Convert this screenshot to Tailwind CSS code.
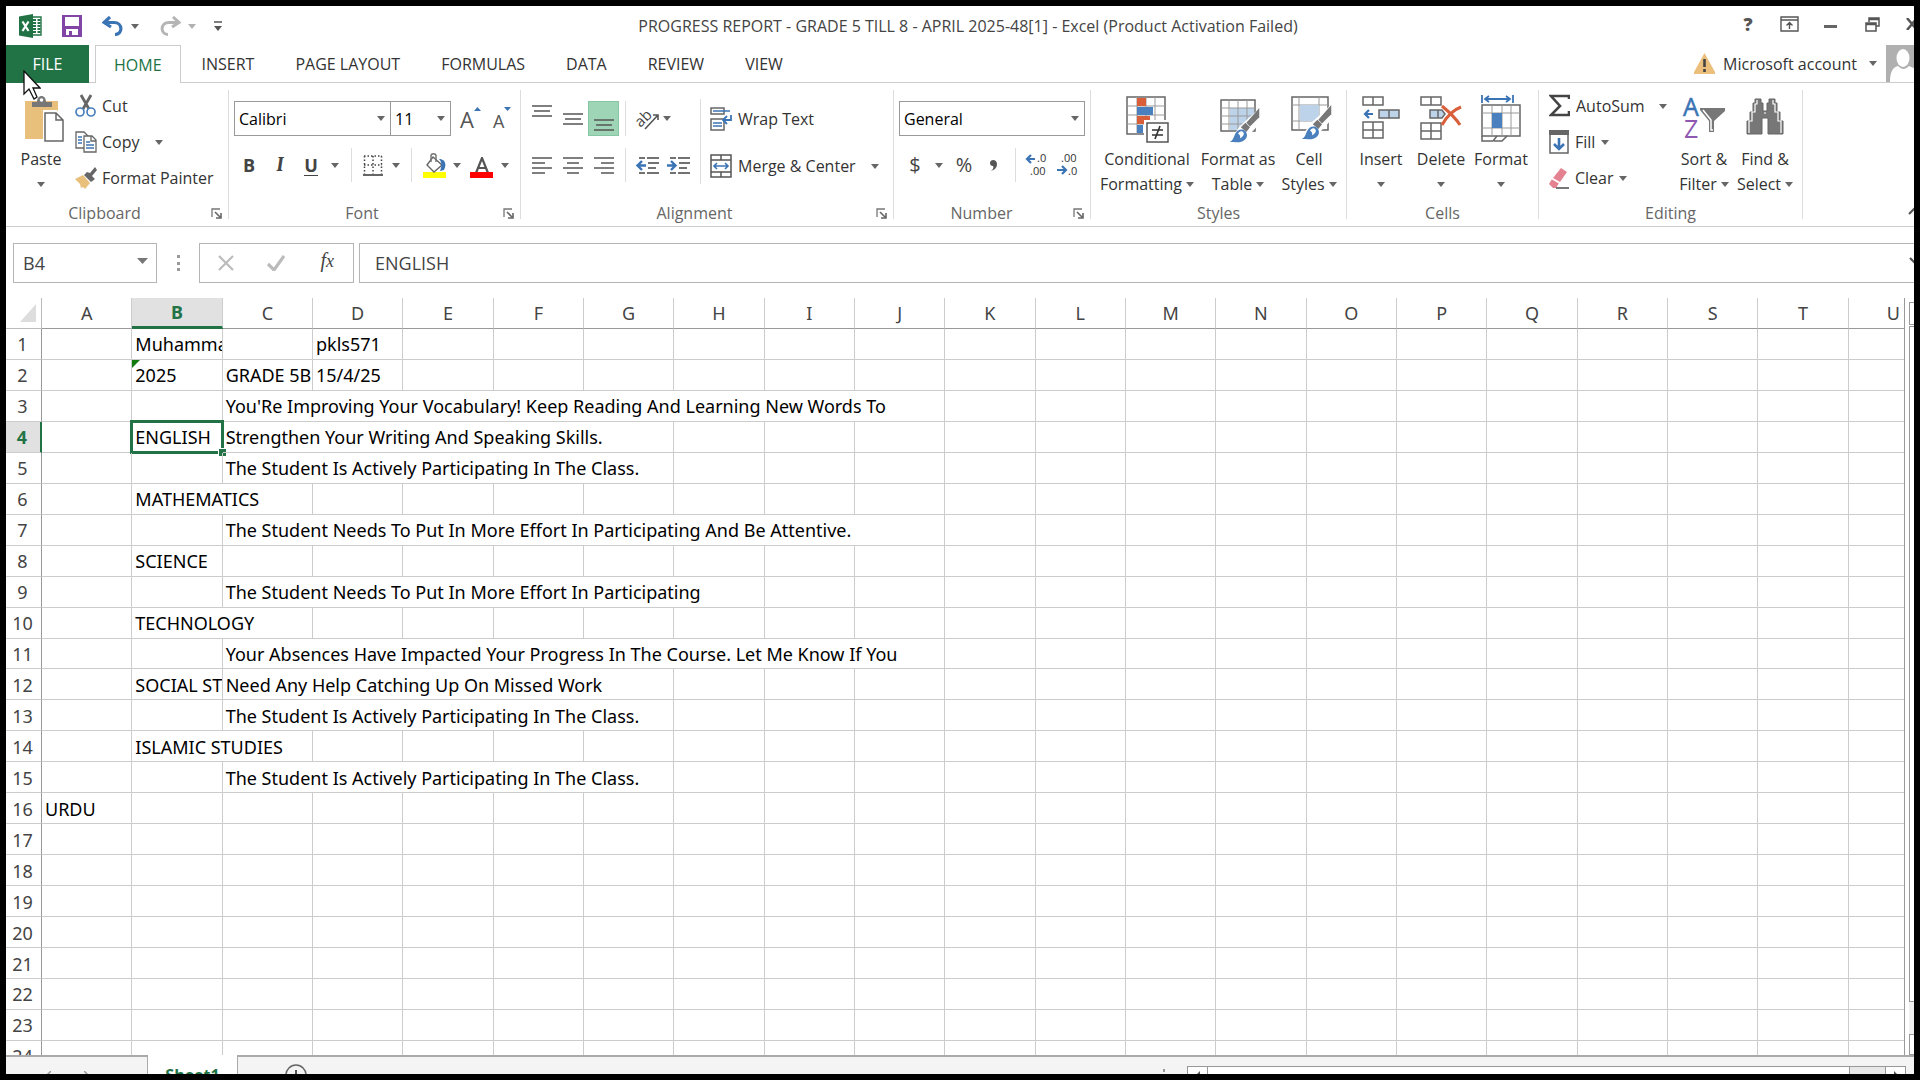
<!DOCTYPE html>
<html lang="en">
<head>
    <meta charset="UTF-8">
    <meta name="viewport" content="width=device-width, initial-scale=1.0">
    <title>PROGRESS REPORT - GRADE 5 TILL 8 - APRIL 2025-48[1] - Excel</title>
    <script src="https://cdn.jsdelivr.net/npm/@tailwindcss/browser@4"></script>
    <style>
        body { font-family: 'Open Sans', 'Noto Sans', sans-serif; }
    </style>
</head>
<body class="h-screen overflow-hidden bg-black p-[6px] text-base text-[#333]">
    <!-- Shared symbols -->
    <svg class="hidden">
        <symbol id="caret" viewBox="0 0 8 5"><path d="M0 0h8L4 5z" fill="#666"/></symbol>
        <symbol id="launcher" viewBox="0 0 11 11"><path d="M1 9V1h8" fill="none" stroke="#777" stroke-width="1.3"/><path d="M4 4l5 5M10 5v5H5" fill="none" stroke="#666" stroke-width="1.6"/></symbol>
        <symbol id="brush" viewBox="0 0 34 38"><path d="M33 0v10L23 20l-4-4z" fill="#777"/><path d="M18 16l5 5-4 5-6-5z" fill="#777"/><path d="M1 37c4-2 4-5 6-9 2-5 8-6 11-3 3 4 2 9-3 11-4 2-10 1-14 1z" fill="#4a80bd"/><path d="M10 28c1-3 5-4 6-1 1 2-1 5-4 6 1-2 0-4-2-5z" fill="#fff"/></symbol>
    </svg>

    <div class="relative flex h-full flex-col overflow-hidden bg-white">
        <!-- Title bar -->
        <header class="grid h-[39px] shrink-0 grid-cols-[1fr_auto_1fr] items-center">
            <div class="flex items-center pl-[13px] pt-px">
                <svg class="h-6 w-6" viewBox="0 0 24 24"><path d="M10 3h12v18H10z" fill="#fff" stroke="#217346" stroke-width="1.4"/><path d="M14 6h3M18.500 6h3M14 9h3M18.500 9h3M14 12h3M18.500 12h3M14 15h3M18.500 15h3M14 18h3M18.500 18h3" stroke="#217346" stroke-width="1.800"/><path d="M0 2.500L14 0v24L0 21.500z" fill="#217346"/><path d="M3.500 7.500l6 9.500M9.500 7.500l-6 9.500" stroke="#fff" stroke-width="2.200"/></svg>
                <button aria-label="Save" class="ml-[19px]"><svg class="h-[22px] w-5" viewBox="0 0 20 22"><path d="M0 0h20v22H0z" fill="#8146a5"/><path d="M3 2h14v9H3zM4 14h12v6H4z" fill="#fff"/><path d="M7 16h3v4H7z" fill="#8146a5"/></svg></button>
                <button aria-label="Undo" class="ml-5"><svg class="h-5 w-[22px]" viewBox="0 0 22 20"><path d="M8 1L2 6.500 9 11M3 6.500h9c9 0 9 12 1 12" fill="none" stroke="#3b74b5" stroke-width="3.200"/></svg></button>
                <button aria-label="Undo list" class="ml-[7px]"><svg class="h-[5px] w-2"><use href="#caret"/></svg></button>
                <button aria-label="Redo" class="ml-5"><svg class="h-5 w-[22px]" viewBox="0 0 22 20"><path d="M14 1l6 5.500L13 11M19 6.500h-9c-9 0-9 12-1 12" fill="none" stroke="#b5b5b5" stroke-width="3"/></svg></button>
                <button aria-label="Redo list" class="ml-[7px] opacity-50"><svg class="h-[5px] w-2"><use href="#caret"/></svg></button>
                <button aria-label="Customize Quick Access Toolbar" class="ml-[18px]"><svg class="h-[10px] w-2" viewBox="0 0 8 10"><path d="M0 1h8" stroke="#555" stroke-width="1.500"/><path d="M0 5h8l-4 5z" fill="#555"/></svg></button>
            </div>
            <h1 class="pl-4 text-[#444]">PROGRESS REPORT - GRADE 5 TILL 8 - APRIL 2025-48[1] - Excel (Product Activation Failed)</h1>
            <div class="-mr-1 flex items-center justify-end pb-[3px] text-[#555]">
                <button aria-label="Help" class="w-9 text-lg leading-none font-extrabold">?</button>
                <button aria-label="Ribbon display options" class="ml-[14px]"><svg class="h-4 w-[19px]" viewBox="0 0 19 16" fill="none" stroke="#555" stroke-width="1.400"><path d="M1 1h17v14H1zM1 4h17M9.500 13V7M6.500 9.500l3-3 3 3"/></svg></button>
                <button aria-label="Minimize" class="ml-[25px] pt-[5px]"><svg class="h-[3px] w-[13px]"><path d="M0 0h13v3H0z" fill="#666"/></svg></button>
                <button aria-label="Restore" class="ml-[28px]"><svg class="h-[15px] w-[15px]" viewBox="0 0 15 15" fill="none" stroke="#555" stroke-width="1.500"><path d="M4 5V1h10v8h-3M1 6h10v8H1zM1 7.500h10M4 2.500h10"/></svg></button>
                <button aria-label="Close" class="ml-[26px]"><svg class="h-3 w-3" viewBox="0 0 12 12"><path d="M1 0l10 12M11 0L1 12" stroke="#555" stroke-width="2.500"/></svg></button>
            </div>
        </header>

        <!-- Ribbon tabs -->
        <nav class="flex h-[38px] shrink-0 items-stretch">
            <button class="w-[83px] bg-[#217346] text-white">FILE</button>
            <span class="w-[6px] border-b border-[#ccc]"></span>
            <button class="border border-b-0 border-[#ccc] px-[18px] text-[#217346]">HOME</button>
            <div class="flex grow gap-px border-b border-[#ccc] pl-px">
                <button class="px-5">INSERT</button>
                <button class="px-5">PAGE LAYOUT</button>
                <button class="px-5">FORMULAS</button>
                <button class="px-5">DATA</button>
                <button class="px-5">REVIEW</button>
                <button class="px-5">VIEW</button>
                <button class="ml-auto flex items-center gap-2 pr-2">
                    <svg class="h-[21px] w-[21px]" viewBox="0 0 21 21"><path d="M10.500 0L21 19v2H0v-2z" fill="#ecc07c"/><path d="M10.500 6v8M10.500 16v3" stroke="#444" stroke-width="2.600"/></svg>
                    Microsoft account
                    <svg class="ml-1 h-[5px] w-2"><use href="#caret"/></svg>
                </button>
                <svg class="h-[37px] w-7 bg-[#b0b0b0]" viewBox="0 0 28 37"><ellipse cx="17" cy="13" rx="6.500" ry="9" fill="#fff"/><path d="M4 37c0-12 4-15 8-16 4 4 7 4 11 0l7 3v13z" fill="#fff"/></svg>
            </div>
        </nav>

        <!-- Ribbon -->
        <section class="flex h-36 shrink-0 border-b border-[#ccc] pt-[7px] pb-[7px]">
            <!-- Clipboard -->
            <div class="flex w-[223px] flex-col border-r border-[#ddd]">
                <div class="flex grow">
                    <button class="ml-3 flex w-[46px] flex-col items-center justify-start pt-[6px] leading-[25px]">
                        <svg class="mb-1 ml-[6px] h-[46px] w-10" viewBox="0 0 40 46"><path d="M1 5h33v38H1z" fill="#e8c07c"/><path d="M8 11V6h5c0-8 9-8 9 0h6v5z" fill="#777"/><circle cx="17.500" cy="4" r="1.800" fill="#fff"/><path d="M19 14h14l8 8v24H19z" fill="#fff"/><path d="M21 17h11l7 7v21H21zM32 17v7h7" fill="#fff" stroke="#666" stroke-width="1.500"/></svg>
                        <span class="pt-px">Paste</span>
                        <svg class="mt-[10px] h-[5px] w-2"><use href="#caret"/></svg>
                    </button>
                    <div class="-mt-[2px] ml-[11px] flex flex-col">
                        <button class="flex h-9 items-center gap-[5px]"><svg class="h-6 w-[22px]" viewBox="0 0 22 24"><path d="M6 1l8 14M16 1L8 15" stroke="#666" stroke-width="2.800"/><circle cx="5" cy="18" r="4" fill="none" stroke="#4a80bd" stroke-width="1.700"/><circle cx="16" cy="18" r="4" fill="none" stroke="#4a80bd" stroke-width="1.700"/></svg>Cut</button>
                        <button class="flex h-9 items-center gap-[5px]"><svg class="h-[22px] w-[22px]" viewBox="0 0 22 22" stroke="#666" stroke-width="1.300"><path d="M1 1h8l4 4v12H1z" fill="#fff"/><path d="M3 6h4M3 9h4M3 12h4" stroke="#3b74b5"/><path d="M9 5h8l4 4v12H9zM16 5v5h5" fill="#fff"/><path d="M11 11h4M11 14h8M11 17h8" stroke="#3b74b5" stroke-width="1.600"/></svg>Copy <svg class="ml-[10px] h-[5px] w-2"><use href="#caret"/></svg></button>
                        <button class="flex h-9 items-center gap-[5px]"><svg class="h-[22px] w-[22px]" viewBox="0 0 22 22"><path d="M20 0l2 3-5 6 3 3-4 3-7-7 3-3 3 1z" fill="#666"/><path d="M8 8l7 8-5 6-2-2-2 1-1-4-5-5z" fill="#e8c07c"/></svg>Format Painter</button>
                    </div>
                </div>
                <div class="flex h-3 items-center pr-[6px] text-[#666]"><span class="grow pl-1 text-center -indent-3">Clipboard</span><button aria-label="Clipboard options"><svg class="h-[11px] w-[11px]"><use href="#launcher"/></svg></button></div>
            </div>

            <!-- Font -->
            <div class="flex w-[292px] flex-col border-r border-[#ddd]">
                <div class="grow pt-[11px] pl-[5px]">
                    <div class="flex h-[35px]">
                        <div class="relative h-[35px] w-[157px]">
                            <select aria-label="Font" class="h-full w-full appearance-none border border-[#999] px-1 text-black"><option>Calibri</option></select>
                            <svg class="pointer-events-none absolute top-[15px] right-[6px] h-[5px] w-2"><use href="#caret"/></svg>
                        </div>
                        <div class="relative -ml-px h-[35px] w-[61px]">
                            <select aria-label="Font size" class="h-full w-full appearance-none border border-[#999] px-1 text-black"><option>11</option></select>
                            <svg class="pointer-events-none absolute top-[15px] right-[6px] h-[5px] w-2"><use href="#caret"/></svg>
                        </div>
                        <button aria-label="Increase font size" class="ml-[9px] flex items-start pt-1 text-[22px] leading-7 text-[#555]">A<svg class="mt-[2px] h-1 w-[7px]"><path d="M0 4h7L3.500 0z" fill="#3b74b5"/></svg></button>
                        <button aria-label="Decrease font size" class="ml-3 flex items-start pt-1 text-lg leading-8 text-[#555]">A<svg class="mt-[2px] h-1 w-[7px]"><path d="M0 0h7L3.500 4z" fill="#3b74b5"/></svg></button>
                    </div>
                    <div class="mt-3 flex h-[34px] items-center text-[#444]">
                        <button class="w-[30px] text-lg font-bold">B</button>
                        <button class="w-8 font-serif text-xl font-bold italic">I</button>
                        <button class="flex h-[22px] w-[30px] items-center justify-center"><span class="border-b border-[#444] text-lg leading-5 font-bold">U</span></button>
                        <button aria-label="Underline list" class="flex w-[18px] justify-center"><svg class="h-[5px] w-2"><use href="#caret"/></svg></button>
                        <span class="mx-[7px] h-full w-px bg-[#ddd]"></span>
                        <button aria-label="Borders" class="flex w-[27px] justify-center"><svg class="h-[21px] w-5" viewBox="0 0 20 21" fill="none"><path d="M1 1h18M1 10h18M1.500 1v18M10 1v18M18.500 1v18" stroke="#444" stroke-width="1.500" stroke-dasharray="1.500 2"/><path d="M0 20h20" stroke="#555" stroke-width="1.800"/></svg></button>
                        <button aria-label="Borders list" class="flex w-5 justify-center"><svg class="h-[5px] w-2"><use href="#caret"/></svg></button>
                        <span class="mx-[5px] h-full w-px bg-[#ddd]"></span>
                        <button aria-label="Fill color" class="flex w-[34px] justify-center"><svg class="h-[25px] w-[23px]" viewBox="0 0 23 25"><path d="M0 19h23v6H0z" fill="#ff0"/><path d="M10 4l9 8-8 7-7-7z" fill="#fff" stroke="#666" stroke-width="1.400"/><path d="M8 9V3c0-3 5-3 5 0v6" fill="none" stroke="#777" stroke-width="1.500"/><path d="M16 6c6 0 8 5 5 11l-4 1c2-5 2-9-1-12z" fill="#3b74b5"/></svg></button>
                        <button aria-label="Fill color list" class="flex w-3 justify-center"><svg class="h-[5px] w-2"><use href="#caret"/></svg></button>
                        <button aria-label="Font color" class="flex w-9 justify-center pt-1"><svg class="h-[21px] w-[23px]" viewBox="0 0 23 21"><path d="M6 16L12 1l6 15M8 11h8" fill="none" stroke="#555" stroke-width="2.200"/><path d="M0 15h23v6H0z" fill="#f00"/></svg></button>
                        <button aria-label="Font color list" class="flex w-3 justify-center"><svg class="h-[5px] w-2"><use href="#caret"/></svg></button>
                    </div>
                </div>
                <div class="flex h-3 items-center pr-[6px] text-[#666]"><span class="grow text-center -indent-2">Font</span><button aria-label="Font options"><svg class="h-[11px] w-[11px]"><use href="#launcher"/></svg></button></div>
            </div>

            <!-- Alignment -->
            <div class="flex w-[373px] flex-col border-r border-[#ddd]">
                <div class="flex grow pl-[5px]">
                    <div class="pt-[11px]">
                        <div class="flex h-[35px] items-center">
                            <button aria-label="Top align" class="flex h-full w-[31px] justify-center pt-1"><svg class="h-3 w-5"><path d="M0 1h20M2 6h16M0 11h20" stroke="#555" stroke-width="1.500"/></svg></button>
                            <button aria-label="Middle align" class="flex h-full w-[31px] items-center justify-center"><svg class="h-3 w-5"><path d="M0 1h20M2 6h16M0 11h20" stroke="#555" stroke-width="1.500"/></svg></button>
                            <button aria-label="Bottom align" class="flex h-full w-[31px] items-end justify-center border border-[#86c7a3] bg-[#9fd5b7] pb-1"><svg class="h-3 w-5"><path d="M0 1h20M2 6h16M0 11h20" stroke="#555" stroke-width="1.500"/></svg></button>
                            <span class="mx-[6px] h-full w-px bg-[#ddd]"></span>
                            <button aria-label="Orientation" class="flex w-[31px] items-center justify-center"><svg class="h-6 w-6 overflow-visible" viewBox="0 0 24 24"><text x="0" y="18" transform="rotate(-45 6 14)" font-size="15" fill="#444">ab</text><path d="M9 22L22 8M17 8h5v5" fill="none" stroke="#555" stroke-width="1.600"/></svg></button>
                            <button aria-label="Orientation list"><svg class="h-[5px] w-2"><use href="#caret"/></svg></button>
                        </div>
                        <div class="mt-3 flex h-[34px] items-center">
                            <button aria-label="Align left" class="flex w-[31px] justify-center"><svg class="h-[17px] w-5"><path d="M0 1h20M0 6h13M0 11h20M0 16h13" stroke="#555" stroke-width="1.500"/></svg></button>
                            <button aria-label="Center" class="flex w-[31px] justify-center"><svg class="h-[17px] w-5"><path d="M0 1h20M4 6h12M0 11h20M4 16h12" stroke="#555" stroke-width="1.500"/></svg></button>
                            <button aria-label="Align right" class="flex w-[31px] justify-center"><svg class="h-[17px] w-5"><path d="M0 1h20M7 6h13M0 11h20M7 16h13" stroke="#555" stroke-width="1.500"/></svg></button>
                            <span class="mx-[6px] h-full w-px bg-[#ddd]"></span>
                            <button aria-label="Decrease indent" class="flex w-[31px] justify-center"><svg class="h-[17px] w-[23px]" viewBox="0 0 23 17" fill="none"><path d="M3 1h6M11 1h12M12 6h11M12 11h8M3 16h6M11 16h12" stroke="#444" stroke-width="1.600"/><path d="M10 8.500H2M6 4L1.500 8.500 6 13" stroke="#3b74b5" stroke-width="2.400"/></svg></button>
                            <button aria-label="Increase indent" class="flex w-[31px] justify-center"><svg class="h-[17px] w-[23px]" viewBox="0 0 23 17" fill="none"><path d="M3 1h6M11 1h12M12 6h11M12 11h8M3 16h6M11 16h12" stroke="#444" stroke-width="1.600"/><path d="M0 8.500h8M4 4l4.500 4.500L4 13" stroke="#3b74b5" stroke-width="2.400"/></svg></button>
                        </div>
                    </div>
                    <span class="mt-[9px] mr-[9px] ml-[6px] h-[85px] w-px bg-[#ddd]"></span>
                    <div class="pt-[11px]">
                        <button class="flex h-[35px] items-center gap-[6px]"><svg class="h-6 w-[22px]" viewBox="0 0 22 24" fill="none"><path d="M1 1h13v6H1zM1 12h13v11H1z" stroke="#666" stroke-width="1.500"/><path d="M3 4h17M3 16h9M3 19h9" stroke="#3b74b5" stroke-width="1.600"/><path d="M21 8v5h-7M17 9l-4 4 4 4" stroke="#3b74b5" stroke-width="1.800"/></svg>Wrap Text</button>
                        <button class="mt-[13px] flex h-[34px] items-center gap-[6px]"><svg class="h-6 w-[22px]" viewBox="0 0 22 24" fill="none"><path d="M1 1h20v22H1zM1 6h20M1 18h20M11 1v5M11 18v5" stroke="#555" stroke-width="1.500"/><path d="M4 12h14M7 9l-3 3 3 3M15 9l3 3-3 3" stroke="#3b74b5" stroke-width="1.600"/></svg>Merge &amp; Center <svg class="ml-[9px] h-[5px] w-2"><use href="#caret"/></svg></button>
                    </div>
                </div>
                <div class="flex h-3 items-center pr-[6px] text-[#666]"><span class="grow text-center -indent-2">Alignment</span><button aria-label="Alignment options"><svg class="h-[11px] w-[11px]"><use href="#launcher"/></svg></button></div>
            </div>

            <!-- Number -->
            <div class="flex w-[197px] flex-col border-r border-[#ddd]">
                <div class="grow px-[5px] pt-[11px]">
                    <div class="relative h-[35px]">
                        <select aria-label="Number format" class="h-full w-full appearance-none border border-[#999] px-1 text-black"><option>General</option></select>
                        <svg class="pointer-events-none absolute top-[15px] right-[6px] h-[5px] w-2"><use href="#caret"/></svg>
                    </div>
                    <div class="mt-3 flex h-[34px] items-center text-[#444]">
                        <button class="w-8 text-xl">$</button>
                        <button aria-label="Accounting format list" class="flex w-4 justify-center"><svg class="h-[5px] w-2"><use href="#caret"/></svg></button>
                        <button class="w-[34px] text-xl">%</button>
                        <button aria-label="Comma style" class="flex w-6 justify-center"><svg class="h-[11px] w-[7px]" viewBox="0 0 7 11"><path d="M0 3c0-4 7-4 7 1 0 4-3 6-6 7 2-2 3-3 2-5-2 0-3-1-3-3z" fill="#555"/></svg></button>
                        <span class="mr-[6px] ml-[10px] h-full w-px bg-[#ddd]"></span>
                        <button aria-label="Increase decimal" class="w-[31px]"><svg class="ml-[4px] h-[22px] w-[22px] overflow-visible" viewBox="0 0 22 22"><path d="M9 5H2M5 1L1 5l4 4" fill="none" stroke="#3b74b5" stroke-width="2.200"/><text x="11" y="8" font-size="11" fill="#333">.0</text><text x="4" y="21" font-size="11" fill="#333">.00</text></svg></button>
                        <button aria-label="Decrease decimal" class="w-[31px]"><svg class="ml-[4px] h-[22px] w-[22px] overflow-visible" viewBox="0 0 22 22"><path d="M0 16h8M5 12l4 4-4 4" fill="none" stroke="#3b74b5" stroke-width="2.200"/><text x="4" y="8" font-size="11" fill="#333">.00</text><text x="11" y="21" font-size="11" fill="#333">.0</text></svg></button>
                    </div>
                </div>
                <div class="flex h-3 items-center pr-[6px] text-[#666]"><span class="grow text-center -indent-1">Number</span><button aria-label="Number options"><svg class="h-[11px] w-[11px]"><use href="#launcher"/></svg></button></div>
            </div>

            <!-- Styles -->
            <div class="flex w-64 flex-col border-r border-[#ddd]">
                <div class="flex grow items-start pt-[6px] pl-1 leading-[25px]">
                    <button class="flex w-[104px] flex-col items-center whitespace-nowrap">
                        <svg class="mb-1 h-[47px] w-[43px] shrink-0" viewBox="0 0 43 47"><path d="M1 1h38v37H1z" fill="#fff" stroke="#666" stroke-width="1.500"/><path d="M1 10h38M1 19h38M1 28h38M11 1v37M20 1v37M29 1v37" stroke="#999"/><path d="M11 2h9v8h-9zM11 20h13v8H11z" fill="#d95f3b"/><path d="M11 11h16v8H11zM11 29h6v8h-6z" fill="#4a80bd"/><path d="M18 24h25v23H18z" fill="#fff"/><path d="M21 27h21v19H21z" fill="#fff" stroke="#555" stroke-width="1.500"/><path d="M26 34h11M26 39h11M34 30l-5 13" stroke="#333" stroke-width="1.600"/></svg>
                        <span>Conditional</span>
                        <span class="flex items-center gap-1">Formatting <svg class="h-[5px] w-2"><use href="#caret"/></svg></span>
                    </button>
                    <button class="flex w-[78px] flex-col items-center whitespace-nowrap">
                        <svg class="mb-1 ml-[6px] h-[47px] w-[42px] shrink-0" viewBox="0 0 42 47"><path d="M1 4h34v31H1z" fill="#fff" stroke="#666" stroke-width="1.500"/><path d="M10 12h24v22H10z" fill="#bcd3ea"/><path d="M1 12h34M1 20h34M1 28h34M9 4v31M18 4v31M27 4v31" stroke="#999"/><path d="M42 10v15L30 38l-9 9H8L20 30z" fill="#fff"/><use href="#brush" x="8" y="12" width="33" height="35"/></svg>
                        <span>Format as</span>
                        <span class="flex items-center gap-1">Table <svg class="h-[5px] w-2"><use href="#caret"/></svg></span>
                    </button>
                    <button class="flex w-16 flex-col items-center whitespace-nowrap">
                        <svg class="mb-1 ml-[6px] h-[47px] w-[42px] shrink-0" viewBox="0 0 42 47"><path d="M1 1h36v33H1z" fill="#fff" stroke="#666" stroke-width="1.500"/><path d="M1 9h36M1 25h36M8 1v33M28 1v33" stroke="#999"/><path d="M9 9h19v16H9z" fill="#bcd3ea"/><path d="M42 7v15L30 35l-9 9H8L20 27z" fill="#fff"/><use href="#brush" x="9" y="9" width="33" height="35"/></svg>
                        <span>Cell</span>
                        <span class="flex items-center gap-1">Styles <svg class="h-[5px] w-2"><use href="#caret"/></svg></span>
                    </button>
                </div>
                <div class="h-3 text-center leading-3 text-[#666]">Styles</div>
            </div>

            <!-- Cells -->
            <div class="flex w-48 flex-col border-r border-[#ddd]">
                <div class="flex grow items-start pt-[6px] pl-1 leading-[25px]">
                    <button class="flex w-[60px] flex-col items-center">
                        <svg class="mb-1 h-[47px] w-[38px] shrink-0" viewBox="0 0 38 47" fill="#fff" stroke="#666" stroke-width="1.500"><path d="M1 1h20v8H1zM11 1v8M1 26h20v16H1zM1 34h20M11 26v16"/><path d="M17 14h20v8H17zM27 14v8" fill="#bcd3ea"/><path d="M11 18H3M7 14l-4 4 4 4" fill="none" stroke="#3b74b5" stroke-width="2.200"/></svg>
                        <span>Insert</span>
                        <svg class="mt-[10px] h-[5px] w-2"><use href="#caret"/></svg>
                    </button>
                    <button class="flex w-[60px] flex-col items-center">
                        <svg class="mb-1 h-[47px] w-[42px] shrink-0" viewBox="0 0 42 47" fill="#fff" stroke="#666" stroke-width="1.500"><path d="M1 1h20v8H1zM11 1v8M1 27h20v16H1zM1 35h20M11 27v16"/><path d="M10 14h12l3 4-3 4H10zM18 14v8" fill="#bcd3ea"/><path d="M22 10c6 5 13 11 18 19M41 11C33 14 27 20 22 29" fill="none" stroke="#d95f3b" stroke-width="3"/></svg>
                        <span>Delete</span>
                        <svg class="mt-[10px] h-[5px] w-2"><use href="#caret"/></svg>
                    </button>
                    <button class="flex w-[60px] flex-col items-center">
                        <svg class="-mt-[2px] mb-1 h-[49px] w-10 shrink-0" viewBox="0 0 40 49" fill="none"><path d="M1 11h38v31H1z" fill="#fff" stroke="#666" stroke-width="1.500"/><path d="M1 19h38M1 34h38M11 11v31M21 11v31M30 11v31" stroke="#999"/><path d="M11 19h10v15H11z" fill="#4a80bd"/><path d="M1 42v5h11l4-5M13 47h8l5-5" stroke="#666" stroke-width="1.500"/><path d="M1 1v8M32 1v8M4 5h25M8 2L4 5l4 3M25 2l4 3-4 3" stroke="#3b74b5" stroke-width="1.800"/></svg>
                        <span>Format</span>
                        <svg class="mt-[10px] h-[5px] w-2"><use href="#caret"/></svg>
                    </button>
                </div>
                <div class="h-3 text-center leading-3 text-[#666]">Cells</div>
            </div>

            <!-- Editing -->
            <div class="flex w-[264px] flex-col border-r border-[#ddd]">
                <div class="flex grow items-start pl-[10px]">
                    <div class="-mt-[2px] flex w-[125px] flex-col items-start">
                        <button class="flex h-9 items-center gap-[6px]"><svg class="h-6 w-[21px]" viewBox="0 0 21 24"><path d="M20 5V2H2l9 10L2 21h18v-4" fill="none" stroke="#444" stroke-width="2.600"/></svg>AutoSum <svg class="ml-2 h-[5px] w-2"><use href="#caret"/></svg></button>
                        <button class="flex h-9 items-center gap-[6px]"><svg class="h-6 w-5" viewBox="0 0 20 24"><path d="M1 1h18v22H1z" fill="#fff" stroke="#666" stroke-width="1.500"/><path d="M0 0h20v5H0z" fill="#666"/><path d="M10 8v11M5 14l5 5 5-5" fill="none" stroke="#3b74b5" stroke-width="2.600"/></svg>Fill <svg class="h-[5px] w-2"><use href="#caret"/></svg></button>
                        <button class="flex h-9 items-center gap-[6px]"><svg class="h-[21px] w-5" viewBox="0 0 20 21"><path d="M12 0l6 4-7 10-7-4z" fill="#e58291"/><path d="M3 11l7 4-3 5H4l-4-4z" fill="#e58291"/><path d="M3 11l7 4" stroke="#fff"/><path d="M7 20h13" stroke="#555" stroke-width="1.600"/></svg>Clear <svg class="-ml-px h-[5px] w-2"><use href="#caret"/></svg></button>
                    </div>
                    <div class="flex pt-[6px] leading-[25px]">
                        <button class="flex w-[60px] flex-col items-center whitespace-nowrap">
                            <svg class="mb-1 h-[47px] w-[42px] shrink-0 overflow-visible" viewBox="0 0 42 47"><text x="0" y="20" font-size="25" fill="#3b74b5" stroke="#3b74b5" stroke-width="0.500">A</text><text x="1" y="42" font-size="25" fill="#8e57b0">Z</text><path d="M17 12h25v3L31 25v11h-5V25L17 14z" fill="#777"/><path d="M20 14l8 10v10h2" fill="none" stroke="#fff" stroke-width="1.500"/></svg>
                            <span>Sort &amp;</span>
                            <span class="flex items-center gap-1">Filter <svg class="h-[5px] w-2"><use href="#caret"/></svg></span>
                        </button>
                        <button class="flex w-[62px] flex-col items-center whitespace-nowrap">
                            <svg class="mb-1 h-[47px] w-[38px] shrink-0" viewBox="0 0 38 47"><path d="M9 3h6v4h2v8h4V7h2V3h6v4h2v9h3v9h3v13H22V22h-6v16H1V25h3v-9h3V7h2z" fill="#777" stroke="#666"/><path d="M11 4v4H9v8H6v9H3v12M27 4v4h2v8h3v9h3v12M18 17h2" fill="none" stroke="#fff" stroke-width="1.200"/></svg>
                            <span>Find &amp;</span>
                            <span class="flex items-center gap-1">Select <svg class="h-[5px] w-2"><use href="#caret"/></svg></span>
                        </button>
                    </div>
                </div>
                <div class="h-3 text-center leading-3 text-[#666]">Editing</div>
            </div>
            <button aria-label="Collapse ribbon" class="-mr-[6px] ml-auto self-end pb-1"><svg class="h-2 w-3" viewBox="0 0 12 8"><path d="M1 7l5-5 5 5" fill="none" stroke="#555" stroke-width="2.200"/></svg></button>
        </section>

        <!-- Formula bar -->
        <section class="mt-4 flex h-10 shrink-0 pl-[7px] text-lg text-[#444]">
            <div class="flex w-36 items-center border border-[#b5b5b5] pr-2">
                <input aria-label="Name box" value="B4" class="h-full w-full min-w-0 px-[9px] outline-none">
                <button aria-label="Name list" class="shrink-0 pb-1"><svg class="h-[6px] w-[11px]"><path d="M0 0h11L5.500 6z" fill="#777"/></svg></button>
            </div>
            <div class="flex w-[42px] items-center justify-center"><svg class="h-4 w-[3px]"><path d="M0 0h3v3H0zM0 7h3v3H0zM0 13h3v3H0z" fill="#999"/></svg></div>
            <div class="flex w-[155px] items-center border border-[#b5b5b5]">
                <button aria-label="Cancel" class="flex w-[52px] justify-center"><svg class="h-4 w-4"><path d="M1 1l14 14M15 1L1 15" stroke="#bbb" stroke-width="2.200"/></svg></button>
                <button aria-label="Enter" class="flex w-[50px] justify-center"><svg class="h-4 w-[18px]"><path d="M1 9l6 6L17 1" fill="none" stroke="#bbb" stroke-width="3.200"/></svg></button>
                <button aria-label="Insert function" class="w-[52px] pb-1 font-['Liberation_Serif',serif] text-xl leading-none italic">f<span class="text-lg">x</span></button>
            </div>
            <div class="ml-[5px] flex grow items-center overflow-hidden border border-r-0 border-[#b5b5b5]">
                <input aria-label="Formula" value="ENGLISH" class="h-full grow pl-[15px] outline-none">
                <button aria-label="Expand formula bar" class="-mr-[7px] pb-1"><svg class="h-2 w-3" viewBox="0 0 12 8"><path d="M1 1l5 5 5-5" fill="none" stroke="#555" stroke-width="2.200"/></svg></button>
            </div>
        </section>

        <!-- Sheet -->
        <main class="mt-[15px] flex min-h-0 grow">
            <div class="min-w-0 grow overflow-hidden">
                <table class="h-[774px] w-[1933px] table-fixed border-separate border-spacing-0 font-['Noto_Sans',sans-serif] text-lg leading-[27px] text-black">
                    <thead><tr id="columnHeads"><th class="h-[31px] w-9 border-r border-b border-[#bbb] p-0"><svg class="ml-[14px] h-[18px] w-4"><path d="M16 0v18H0z" fill="#ddd"/></svg></th></tr></thead>
                    <tbody id="sheetRows"></tbody>
                </table>
            </div>
            <!-- Vertical scroll bar -->
            <div class="flex w-[10px] shrink-0 flex-col border-l border-[#999] pl-1">
                <button aria-label="Scroll up" class="mt-1 h-[23px] border border-r-0 border-[#999]"></button>
                <div class="mt-px grow border border-r-0 border-[#999]"></div>
                <div class="h-8 bg-[#f0f0f0]"></div>
                <button aria-label="Scroll down" class="h-[21px] border border-r-0 border-[#999]"></button>
            </div>
        </main>

        <!-- Sheet tabs -->
        <footer class="flex h-[19px] shrink-0 overflow-hidden bg-[#f4f4f4]">
            <div class="flex w-[142px] items-start gap-[33px] border-t-2 border-r border-[#aaa] pt-[14px] pl-10">
                <button aria-label="Previous sheet"><svg class="h-2 w-[5px]"><path d="M5 0L1 4l4 4" fill="none" stroke="#999" stroke-width="1.500"/></svg></button>
                <button aria-label="Next sheet"><svg class="h-2 w-[5px]"><path d="M0 0l4 4-4 4" fill="none" stroke="#999" stroke-width="1.500"/></svg></button>
            </div>
            <button class="flex w-[89px] items-start justify-center bg-white pt-2 font-bold text-[#217346]">Sheet1</button>
            <div class="flex grow items-start border-t-2 border-l border-[#aaa] pl-[47px]">
                <button aria-label="New sheet" class="pt-[7px]"><svg class="h-[22px] w-[22px]" viewBox="0 0 22 22"><circle cx="11" cy="11" r="10" fill="none" stroke="#666" stroke-width="1.500"/><path d="M11 6v10M6 11h10" stroke="#555" stroke-width="2"/></svg></button>
                <span class="mt-3 mr-[22px] ml-auto h-[3px] w-[2px] bg-[#999]"></span>
                <div class="mt-[9px] mr-2 flex h-5 w-[719px] border border-[#999] bg-[#e8e8e8]">
                    <button aria-label="Scroll left" class="flex w-5 justify-center border-r border-[#999] bg-white pt-1"><svg class="h-2 w-1"><path d="M4 0v8L0 4z" fill="#555"/></svg></button>
                    <div class="grow border-r border-[#999] bg-white"></div>
                    <button aria-label="Scroll right" class="ml-[35px] flex w-5 justify-center border-l border-[#999] bg-white pt-1"><svg class="h-2 w-1"><path d="M0 0v8l4-4z" fill="#555"/></svg></button>
                </div>
            </div>
        </footer>

        <!-- Mouse pointer -->
        <svg class="pointer-events-none absolute top-16 left-[17px] h-[30px] w-[18px]" viewBox="0 0 18 30"><path d="M1 1v23l5-5 5 10 3-2-4-9h7z" fill="#fff" stroke="#111" stroke-width="1.300"/></svg>
    </div>

    <script>
        const columns = 'ABCDEFGHIJKLMNOPQRSTU'.split('');
        const active = { col: 'B', row: 4 };

        // Cell text, with the number of columns a long text runs across
        const cells = {
            B1: ['Muhammad'], D1: ['pkls571'],
            B2: ['2025'], C2: ['GRADE 5B'], D2: ['15/4/25'],
            C3: ["You'Re Improving Your Vocabulary! Keep Reading And Learning New Words To", 8],
            B4: ['ENGLISH'], C4: ['Strengthen Your Writing And Speaking Skills.', 5],
            C5: ['The Student Is Actively Participating In The Class.', 5],
            B6: ['MATHEMATICS', 2],
            C7: ['The Student Needs To Put In More Effort In Participating And Be Attentive.', 8],
            B8: ['SCIENCE'],
            C9: ['The Student Needs To Put In More Effort In Participating', 6],
            B10: ['TECHNOLOGY', 2],
            C11: ['Your Absences Have Impacted Your Progress In The Course. Let Me Know If You', 8],
            B12: ['SOCIAL ST'], C12: ['Need Any Help Catching Up On Missed Work', 5],
            C13: ['The Student Is Actively Participating In The Class.', 5],
            B14: ['ISLAMIC STUDIES', 2],
            C15: ['The Student Is Actively Participating In The Class.', 5],
            A16: ['URDU']
        };

        columns.forEach(col => {
            const look = col === active.col ? 'bg-[#e1e1e1] font-bold text-[#217346] border-b-3 border-b-[#217346]' : 'font-normal text-[#444] border-b border-b-[#999]';
            document.getElementById('columnHeads').insertAdjacentHTML('beforeend', `<th scope="col" class="border-r border-r-[#ccc] p-0 ${look}">${col}</th>`);
        });

        for (let row = 1; row <= 24; row++) {
            const look = row === active.row ? 'bg-[#e1e1e1] font-bold text-[#217346] border-r-2 border-r-[#217346]' : 'font-normal text-[#444] border-r border-r-[#999]';
            let html = `<th scope="row" class="h-[30px] border-b border-b-[#ccc] p-0 pt-[2px] pr-1 pl-[2px] ${look}">${row}</th>`;
            for (let c = 0; c < columns.length; c++) {
                const id = columns[c] + row;
                const [text, span] = cells[id] || ['', 1];
                if (columns[c] === active.col && row === active.row) {
                    html += `<td class="relative border-r border-b border-[#ccc] p-0 pt-[2px] pl-[3px] whitespace-nowrap">${text}<span class="absolute -inset-[2px] border-3 border-[#217346]"></span><span class="absolute -right-1 -bottom-1 h-2 w-2 border-t border-l border-white bg-[#217346]"></span></td>`;
                    continue;
                }
                const flag = id === 'B2' ? '<svg class="absolute top-0 left-0 h-2 w-2"><path d="M0 0h8L0 8z" fill="#107c10"/></svg>' : '';
                html += `<td colspan="${span || 1}" class="relative overflow-hidden border-r border-b border-[#ccc] p-0 pt-[2px] pl-[3px] whitespace-nowrap">${flag}${text}</td>`;
                c += (span || 1) - 1;
            }
            document.getElementById('sheetRows').insertAdjacentHTML('beforeend', `<tr>${html}</tr>`);
        }
    </script>
</body>
</html>
